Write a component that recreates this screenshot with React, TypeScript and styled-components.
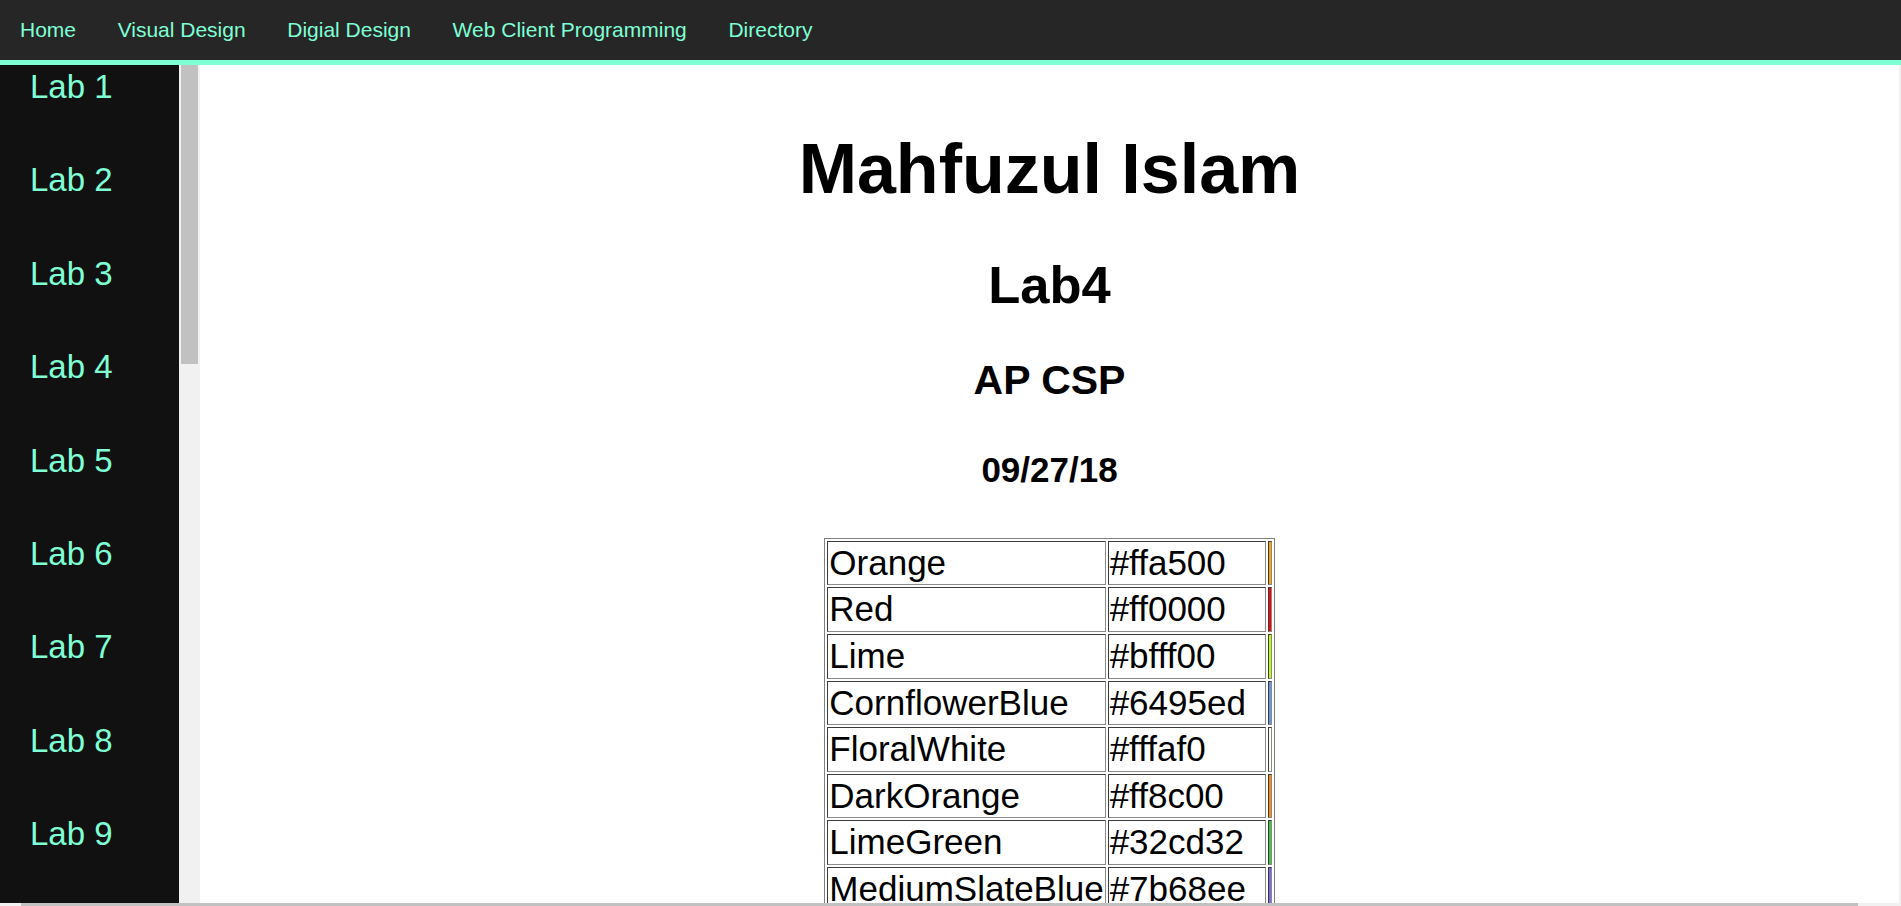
import styled, { createGlobalStyle } from "styled-components"

const GlobalStyle = createGlobalStyle`
    html, body {
        margin: 0;
        padding: 0;
        height: 100%;
        overflow: hidden;
    }

    body {
        font-family: "Liberation Sans", Arial, sans-serif;
        background: #ffffff;
        color: #000000;
    }

    #root { height: 100%; }
`

const Page = styled.div`
    display: flex;
    flex-direction: column;
    height: 100vh;
`

const TopNav = styled.nav`
    flex: none;
    height: 60px;
    display: flex;
    align-items: center;
    background: #262626;
    border-bottom: 5px solid #7fffd4;
`

const NavLink = styled.a`
    padding: 0 20.8px;
    font-size: 21px;
    line-height: 24px;
    color: #7fffd4;
    text-decoration: none;
    cursor: pointer;

    &:first-child { padding-left: 20px; }
`

const Workspace = styled.div`
    flex: 1;
    min-height: 0;
    display: flex;
`

const Sidebar = styled.aside`
    flex: none;
    width: 200px;
    display: flex;
`

const LabList = styled.div`
    flex: 1;
    overflow: hidden;
    background: #111111;
`

const LabLink = styled.a`
    display: block;
    box-sizing: border-box;
    height: 93.4px;
    padding: 3px 0 0 30px;
    font-size: 33px;
    line-height: 38px;
    color: #7fffd4;
    text-decoration: none;
    cursor: pointer;
`

/* the sidebar's own scrollbar, drawn */
const ScrollTrack = styled.div`
    flex: none;
    width: 21px;
    box-sizing: border-box;
    padding: 0 2px;
    background: #f1f1f1;
`

const ScrollThumb = styled.div`
    height: 299px;
    background: #c1c1c1;
`

const Main = styled.main`
    flex: 1;
    min-width: 0;
    overflow: hidden;
    background: #ffffff;
    text-align: center;
    padding-top: 17px;
`

const Title = styled.h1`
    margin: 46.9px 0 45px;
    font-size: 70px;
    font-weight: bold;
`

const Subtitle = styled.h2`
    margin: 43px 0 42.4px;
    font-size: 52.5px;
    font-weight: bold;
`

const Course = styled.h3`
    margin: 41px 0 40.5px;
    font-size: 41px;
    font-weight: bold;
`

const DateLine = styled.h4`
    margin: 46px 0 47.6px;
    font-size: 35px;
    font-weight: bold;
`

const ColorTable = styled.table`
    margin: 0 auto;
    border: 1px solid #808080;
    border-spacing: 2px;
    font-size: 35px;
    line-height: 40.6px;
    text-align: left;
`

const Cell = styled.td<{ $width?: number }>`
    border: 1px solid;
    border-color: #3c3c3c #8a8a8a #8a8a8a #3c3c3c;
    padding: 1px;
    width: ${({ $width }) => ($width ? `${$width}px` : "auto")};
    white-space: nowrap;
`

const Swatch = styled.td<{ $color: string }>`
    border: 1px solid;
    border-color: #3c3c3c #8a8a8a #8a8a8a #3c3c3c;
    padding: 1px;
    width: 0;
    background: ${({ $color }) => $color};
`

/* edges of the page's own scrollbars, cut off by the screenshot */
const EdgeStrip = styled.div`
    flex: none;
    width: 2px;
    background: #f1f1f1;
`

const BottomBar = styled.div`
    flex: none;
    height: 3px;
    padding: 0 43px 0 21px;
    background: #f1f1f1;
`

const BottomThumb = styled.div`
    height: 100%;
    background: #c1c1c1;
`

const navItems = ["Home", "Visual Design", "Digial Design", "Web Client Programming", "Directory"]

const labs = Array.from({ length: 9 }, (_, i) => `Lab ${i + 1}`)

const colors = [
    { name: "Orange", hex: "#ffa500" },
    { name: "Red", hex: "#ff0000" },
    { name: "Lime", hex: "#bfff00" },
    { name: "CornflowerBlue", hex: "#6495ed" },
    { name: "FloralWhite", hex: "#fffaf0" },
    { name: "DarkOrange", hex: "#ff8c00" },
    { name: "LimeGreen", hex: "#32cd32" },
    { name: "MediumSlateBlue", hex: "#7b68ee" },
]

export default function App() {
    return (
        <>
            <GlobalStyle />
            <Page>
                <TopNav>
                    {navItems.map(item => (
                        <NavLink key={item}>{item}</NavLink>
                    ))}
                </TopNav>

                <Workspace>
                    <Sidebar>
                        <LabList>
                            {labs.map(lab => (
                                <LabLink key={lab}>{lab}</LabLink>
                            ))}
                        </LabList>
                        <ScrollTrack>
                            <ScrollThumb />
                        </ScrollTrack>
                    </Sidebar>

                    <Main>
                        <Title>Mahfuzul Islam</Title>
                        <Subtitle>Lab4</Subtitle>
                        <Course>AP CSP</Course>
                        <DateLine>09/27/18</DateLine>

                        <ColorTable>
                            <tbody>
                                {colors.map(c => (
                                    <tr key={c.name}>
                                        <Cell>{c.name}</Cell>
                                        <Cell $width={154}>{c.hex}</Cell>
                                        <Swatch $color={c.hex} />
                                    </tr>
                                ))}
                            </tbody>
                        </ColorTable>
                    </Main>

                    <EdgeStrip />
                </Workspace>

                <BottomBar>
                    <BottomThumb />
                </BottomBar>
            </Page>
        </>
    )
}
